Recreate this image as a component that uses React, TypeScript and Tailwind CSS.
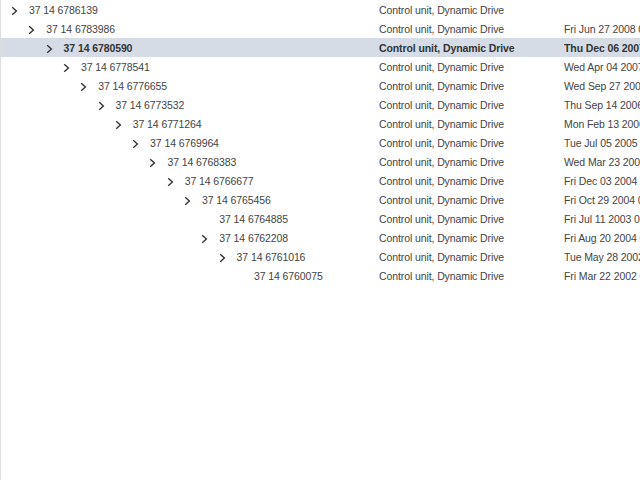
type Row = { id: string; level: number; branch: boolean; date: string };

const rows: Row[] = [
  { id: "37 14 6786139", level: 0, branch: true, date: "" },
  { id: "37 14 6783986", level: 1, branch: true, date: "Fri Jun 27 2008 00:00:00 GMT+0200" },
  { id: "37 14 6780590", level: 2, branch: true, date: "Thu Dec 06 2007 00:00:00 GMT+0100" },
  { id: "37 14 6778541", level: 3, branch: true, date: "Wed Apr 04 2007 00:00:00 GMT+0200" },
  { id: "37 14 6776655", level: 4, branch: true, date: "Wed Sep 27 2006 00:00:00 GMT+0200" },
  { id: "37 14 6773532", level: 5, branch: true, date: "Thu Sep 14 2006 00:00:00 GMT+0200" },
  { id: "37 14 6771264", level: 6, branch: true, date: "Mon Feb 13 2006 00:00:00 GMT+0100" },
  { id: "37 14 6769964", level: 7, branch: true, date: "Tue Jul 05 2005 00:00:00 GMT+0200" },
  { id: "37 14 6768383", level: 8, branch: true, date: "Wed Mar 23 2005 00:00:00 GMT+0100" },
  { id: "37 14 6766677", level: 9, branch: true, date: "Fri Dec 03 2004 00:00:00 GMT+0100" },
  { id: "37 14 6765456", level: 10, branch: true, date: "Fri Oct 29 2004 00:00:00 GMT+0200" },
  { id: "37 14 6764885", level: 11, branch: false, date: "Fri Jul 11 2003 00:00:00 GMT+0200" },
  { id: "37 14 6762208", level: 11, branch: true, date: "Fri Aug 20 2004 00:00:00 GMT+0200" },
  { id: "37 14 6761016", level: 12, branch: true, date: "Tue May 28 2002 00:00:00 GMT+0200" },
  { id: "37 14 6760075", level: 13, branch: false, date: "Fri Mar 22 2002 00:00:00 GMT+0100" },
];

const SELECTED = 2;

function Chevron() {
  return (
    <svg width="7" height="10" viewBox="0 0 7 10" className="shrink-0">
      <path d="M1.2 1.2 L5.4 5 L1.2 8.8" fill="none" stroke="#333" strokeWidth="1.4" />
    </svg>
  );
}

export default function App() {
  return (
    <div
      className="w-[640px] h-[480px] overflow-hidden bg-white border-l border-[#dcdcdc] text-[10.5px] tracking-[-0.1px] text-[#444]"
      style={{ fontFamily: '"Liberation Sans", Arial, sans-serif' }}
    >
      {rows.map((r, i) => {
        const sel = i === SELECTED;
        return (
          <div
            key={r.id}
            className={`flex items-center h-[19px] pt-[2px] whitespace-nowrap ${sel ? "bg-[#d5dce6] font-bold text-[#333]" : ""}`}
          >
            <div className="w-[378px] shrink-0 flex items-center overflow-hidden">
              <div className="shrink-0" style={{ width: 10 + r.level * 17.3 }} />
              <div className="w-[18px] shrink-0 flex items-center">{r.branch && <Chevron />}</div>
              <span>{r.id}</span>
            </div>
            <div className="w-[185px] shrink-0 overflow-hidden">Control unit, Dynamic Drive</div>
            <div className="flex-1 overflow-hidden">{r.date}</div>
          </div>
        );
      })}
    </div>
  );
}
